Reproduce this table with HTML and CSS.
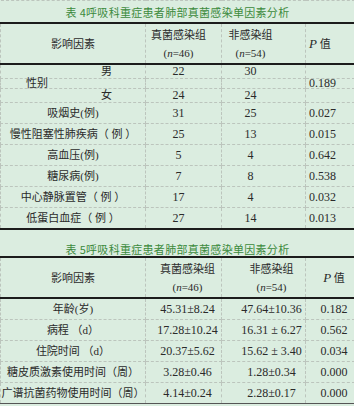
FILE: index.html
```html
<!DOCTYPE html>
<html lang="zh-CN">
<head>
  <meta charset="UTF-8">
  <meta name="viewport" content="width=device-width, initial-scale=1.0">
  <title>呼吸科重症患者肺部真菌感染单因素分析</title>
  <link rel="stylesheet" href="styles.css">
</head>
<body>

  <table class="stat">
    <colgroup>
      <col class="c1"><col class="c2"><col class="c3"><col class="c4">
    </colgroup>

    <!-- 表 4 -->
    <tbody class="t4">
      <tr class="cap">
        <td colspan="4">表 4呼吸科重症患者肺部真菌感染单因素分析</td>
      </tr>
      <tr class="head">
        <td class="name">影响因素</td>
        <td class="g1"><div>真菌感染组</div><div class="n">(<i>n</i>=46)</div></td>
        <td class="g2"><div>非感染组</div><div class="n">(<i>n</i>=54)</div></td>
        <td class="p"><i class="pv">P</i> 值</td>
      </tr>
      <tr class="sub">
        <td class="sex">男</td>
        <td class="g1">22</td>
        <td class="g2">30</td>
        <td class="p"></td>
      </tr>
      <tr class="mid">
        <td class="sexname">性别</td>
        <td class="g1"></td>
        <td class="g2"></td>
        <td class="p">0.189</td>
      </tr>
      <tr class="sub">
        <td class="sex">女</td>
        <td class="g1">24</td>
        <td class="g2">24</td>
        <td class="p"></td>
      </tr>
      <tr>
        <td class="name">吸烟史(例)</td>
        <td class="g1">31</td>
        <td class="g2">25</td>
        <td class="p">0.027</td>
      </tr>
      <tr>
        <td class="name">慢性阻塞性肺疾病（ 例 ）</td>
        <td class="g1">25</td>
        <td class="g2">13</td>
        <td class="p">0.015</td>
      </tr>
      <tr>
        <td class="name">高血压(例)</td>
        <td class="g1">5</td>
        <td class="g2">4</td>
        <td class="p">0.642</td>
      </tr>
      <tr>
        <td class="name">糖尿病(例)</td>
        <td class="g1">7</td>
        <td class="g2">8</td>
        <td class="p">0.538</td>
      </tr>
      <tr>
        <td class="name">中心静脉置管（ 例 ）</td>
        <td class="g1">17</td>
        <td class="g2">4</td>
        <td class="p">0.032</td>
      </tr>
      <tr>
        <td class="name">低蛋白血症（ 例 ）</td>
        <td class="g1">27</td>
        <td class="g2">14</td>
        <td class="p">0.013</td>
      </tr>
    </tbody>

    <!-- 表 5 -->
    <tbody class="t5">
      <tr class="cap">
        <td colspan="4">表 5呼吸科重症患者肺部真菌感染单因素分析</td>
      </tr>
      <tr class="head">
        <td class="name">影响因素</td>
        <td class="g1"><div>真菌感染组</div><div class="n">(<i>n</i>=46)</div></td>
        <td class="g2"><div>非感染组</div><div class="n">(<i>n</i>=54)</div></td>
        <td class="p"><i class="pv">P</i> 值</td>
      </tr>
      <tr>
        <td class="name">年龄(岁)</td>
        <td class="g1">45.31±8.24</td>
        <td class="g2">47.64±10.36</td>
        <td class="p">0.182</td>
      </tr>
      <tr>
        <td class="name">病程 （d）</td>
        <td class="g1">17.28±10.24</td>
        <td class="g2">16.31 ± 6.27</td>
        <td class="p">0.562</td>
      </tr>
      <tr>
        <td class="name">住院时间 （d）</td>
        <td class="g1">20.37±5.62</td>
        <td class="g2">15.62 ± 3.40</td>
        <td class="p">0.034</td>
      </tr>
      <tr>
        <td class="name">糖皮质激素使用时间（周）</td>
        <td class="g1">3.28±0.46</td>
        <td class="g2">1.28±0.34</td>
        <td class="p">0.000</td>
      </tr>
      <tr class="last">
        <td class="name">广谱抗菌药物使用时间（周）</td>
        <td class="g1">4.14±0.24</td>
        <td class="g2">2.28±0.17</td>
        <td class="p">0.000</td>
      </tr>
    </tbody>
  </table>

</body>
</html>
```

FILE: styles.css
```css
body {
  margin: 0;
  padding: 0;
  background-color: #dbede0;
  color: #2a2a2a;
  font-family: "Liberation Serif", "Noto Sans CJK SC", serif;
  font-size: 11px;
}

.stat {
  width: 354px;
  border-collapse: collapse;
  table-layout: fixed;
  background-color: #dbede0;
}

.c1 { width: 145px; }
.c2 { width: 76px; }
.c3 { width: 84px; }
.c4 { width: 49px; }

.stat td {
  border: 1px dashed #bcc5bd;
  padding: 0;
  height: 20px;
  line-height: 14px;
  white-space: nowrap;
  overflow: visible;
}

/* numbers are set a touch larger than the CJK labels */
.stat .g1,
.stat .g2,
.stat .p {
  font-size: 12px;
}

/* table titles */
.stat .cap td {
  color: #3b8a3c;
  text-align: center;
  font-family: "Noto Sans CJK SC", sans-serif;
  letter-spacing: 0.3px;
  border-left: none;
  border-right: none;
}

.t4 .cap td {
  height: 21px;
  border-top: 1px dashed #bcc5bd;
}

.t5 .cap td {
  height: 28px;
  padding-top: 12px;
  box-sizing: border-box;
  border-top: 2px solid #1c1c1c;
}

/* header rows with heavy rules */
.stat .head td {
  border-top: 2px solid #1c1c1c;
  border-bottom: 2px solid #1c1c1c;
  height: 39px;
  line-height: 19px;
  font-size: 11px;
}

.name {
  text-align: center;
}

.head .name,
.head .g1,
.head .g2 {
  font-family: "Noto Sans CJK SC", sans-serif;
}

.n {
  font-family: "Liberation Serif", serif;
}

.pv {
  font-family: "Liberation Serif", serif;
  font-size: 13px;
}

/* gender rows */
.stat .sub td {
  height: 13px;
  line-height: 13px;
}

.sex {
  text-align: right;
  padding-right: 33px !important;
}

.stat .mid td {
  height: 9px;
  line-height: 9px;
}

.sexname {
  padding-left: 25px !important;
}

/* table 4 columns */
.t4 .g1 {
  text-align: center;
  padding-right: 10px;
}

.t4 .g2 {
  text-align: center;
  padding-right: 26px;
}

.t4 .p {
  text-align: left;
  padding-left: 3px;
}

/* table 5 columns */
.t5 .g1 {
  text-align: center;
  padding-left: 8px;
}

.t5 .g2 {
  text-align: center;
  padding-left: 16px;
}

.t5 .p {
  text-align: center;
  padding-left: 8px;
}

.t5 .last td {
  border-bottom: 1px solid #555;
}
```
